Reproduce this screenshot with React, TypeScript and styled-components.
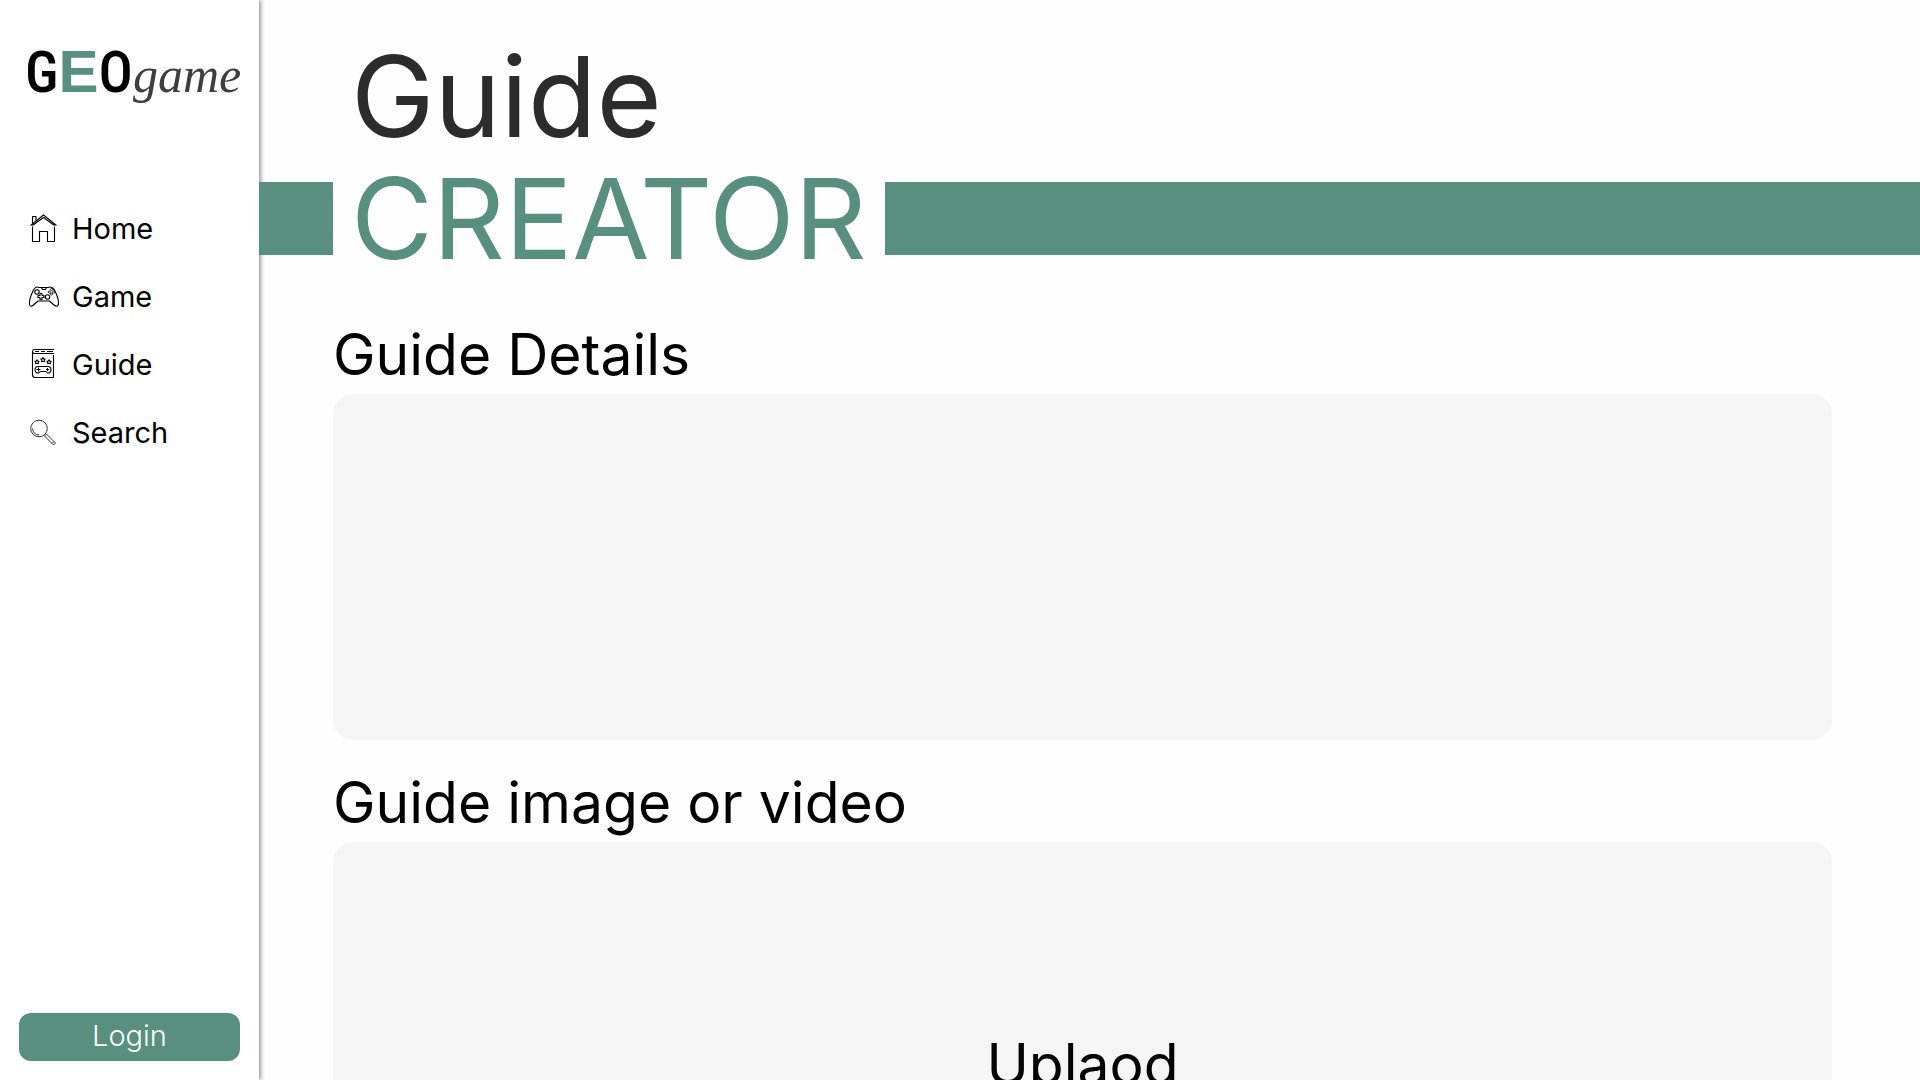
import React from 'react';
import styled, { createGlobalStyle } from 'styled-components';

const green = '#588f7e';

const GlobalStyle = createGlobalStyle`
  *, *::before, *::after { box-sizing: border-box; }
  body {
    margin: 0;
    background: #fefefe;
    color: #000;
    font-family: Inter, 'Noto Sans', sans-serif;
  }
`;

const Page = styled.div`
  display: flex;
  height: 100vh;
`;

const Sidebar = styled.aside`
  display: flex;
  flex-direction: column;
  flex: 0 0 259px;
  min-width: 0;
  padding: 32px 19px 19px;
  background: #fff;
  box-shadow: 2px 0 4px rgba(0, 0, 0, 0.4);
`;

const Logo = styled.a`
  display: flex;
  align-items: baseline;
  height: 100px;
  padding-left: 6px;
  color: #000;
  line-height: 80px;
  text-decoration: none;
  white-space: nowrap;
`;

const LogoLetter = styled.span`
  font-family: 'Roboto Condensed', 'Liberation Sans Narrow', 'Liberation Sans', sans-serif;
  font-size: 57px;
  font-weight: 500;
`;

const LogoAccent = styled.span`
  color: ${green};
  font-family: 'Liberation Sans', sans-serif;
  font-size: 60px;
  font-weight: 700;
`;

const LogoScript = styled.span`
  color: #3e3e3e;
  font-family: 'Liberation Serif', serif;
  font-size: 50px;
  font-style: italic;
`;

const Nav = styled.nav`
  display: flex;
  flex-direction: column;
  flex: 1;
  margin-top: 62px;
  padding-left: 9px;
`;

const NavLink = styled.a`
  display: flex;
  align-items: center;
  gap: 12px;
  height: 68px;
  color: #000;
  font-size: 29px;
  text-decoration: none;
`;

const Icon = styled.svg`
  width: 32px;
  height: 32px;
  fill: none;
  stroke: #000;
  stroke-width: 1.1;
  stroke-linejoin: round;
`;

const LoginButton = styled.button`
  height: 48px;
  padding: 0 0 3px;
  border: 0;
  border-radius: 12px;
  background: ${green};
  color: #fff;
  font-family: inherit;
  font-size: 29px;
  font-weight: 300;
`;

const Main = styled.main`
  position: relative;
  flex: 1;
  min-width: 0;
  overflow-y: auto;
  scrollbar-width: none;
`;

const Title = styled.h1`
  margin: 0;
  padding-top: 35px;
  color: #2c2c2c;
  font-size: 112px;
  font-weight: 400;
  line-height: 122px;
`;

const TitleTop = styled.span`
  display: block;
  padding-left: 92px;
`;

const TitleBand = styled.span`
  display: flex;
  align-items: center;
  color: ${green};

  &::before,
  &::after {
    content: '';
    height: 73px;
    background: ${green};
  }
  &::before { width: 74px; }
  &::after { flex: 1; }
`;

const TitleWord = styled.span`
  padding: 0 18px;
`;

const Content = styled.div`
  display: flex;
  flex-direction: column;
  gap: 31px;
  padding: 44px 88px 64px 74px;
`;

const Section = styled.section`
  display: flex;
  flex-direction: column;
  gap: 7px;
`;

const Heading = styled.h2`
  margin: 0;
  font-size: 57px;
  font-weight: 400;
  line-height: 64px;
`;

const Panel = styled.div<{ $height: number }>`
  display: grid;
  place-items: center;
  min-height: ${({ $height }) => $height}px;
  border-radius: 20px;
  background: #f5f5f5;
`;

const UploadButton = styled.button`
  border: 0;
  background: none;
  color: inherit;
  font-family: inherit;
  font-size: 57px;
  line-height: 64px;
`;

const HomeIcon = () => (
  <Icon viewBox="0 0 32 32" aria-hidden="true">
    <path d="M2.5 13.5 15.5 3 28.5 13.5M4.5 13.5 15.5 5.5 26.5 13.5M4.5 14.5V29.5H11.5V19.5H19.5V29.5H26.5V14.5M4.5 11.5V4.5H8V8.5" />
  </Icon>
);

const GameIcon = () => (
  <Icon viewBox="0 0 32 32" aria-hidden="true">
    <path d="M7.5 7.5Q9 6.5 11 7.5H20Q22 6.5 24 7.5L26.5 10Q31 19 30.5 24Q29.5 28 26 25L21.5 21H10L5.5 25Q2 28 1.5 24Q1 19 5.5 10ZM13.5 7.5 14.5 9.5H17.5L18.5 7.5" />
    <circle cx="9" cy="12" r="2.2" />
    <circle cx="19.5" cy="17" r="2.2" />
    <path d="M12 13.5H14V15.5H16V17.5H14V19.5H12V17.5H10V15.5H12Z" />
    <g strokeWidth="0.8">
      <circle cx="23.5" cy="9.5" r="1.1" />
      <circle cx="21.3" cy="12" r="1.1" />
      <circle cx="25.7" cy="12" r="1.1" />
      <circle cx="23.5" cy="14" r="1.1" />
    </g>
  </Icon>
);

const GuideIcon = () => (
  <Icon viewBox="0 0 32 32" aria-hidden="true">
    <path d="M26 1.5H6Q4.500 1.500 4.500 3.500V26.500Q4.500 29.500 7 29.500H25.500V7M4.500 3.500Q4.500 5.500 6.500 5.500H26M7 3.500H11M13 3.500H17M19 3.500H25" />
    <path d="M15 9.500 15.800 11H17.200L16.200 12.200 16.500 13.500H13.500L13.800 12.200 12.800 11H14.200ZM9 11.800 9.800 13.200H11.200L10.200 14.300 10.500 15.500H7.500L7.800 14.300 6.800 13.200H8.200ZM21 11.800 21.800 13.200H23.200L22.200 14.300 22.500 15.500H19.500L19.800 14.300 18.800 13.200H20.200Z" />
    <path d="M10 18.500H20Q23 18.500 23 22Q22.500 25.500 19.500 25Q18.500 23.500 17.500 23.500H13Q12 23.500 10.500 25Q7.500 25.500 7 22Q7 18.500 10 18.500ZM8.500 21.500H12.500M10.500 19.500V23.500M19.500 20V23M18 21.500H21" />
  </Icon>
);

const SearchIcon = () => (
  <Icon viewBox="0 0 32 32" aria-hidden="true">
    <g stroke="#333" strokeWidth="1">
      <circle cx="11" cy="12.500" r="8.300" />
      <path d="M4.500 12.500Q5 18.500 11 19M16.500 20 18.500 18 27.500 27 25.500 29ZM24 27.500 26 25.500" />
    </g>
  </Icon>
);

const links = [
  { label: 'Home', icon: HomeIcon },
  { label: 'Game', icon: GameIcon },
  { label: 'Guide', icon: GuideIcon },
  { label: 'Search', icon: SearchIcon },
];

export default function App() {
  return (
    <>
      <GlobalStyle />
      <Page>
        <Sidebar>
          <Logo href="#">
            <LogoLetter>G</LogoLetter>
            <LogoAccent>E</LogoAccent>
            <LogoLetter>O</LogoLetter>
            <LogoScript>game</LogoScript>
          </Logo>
          <Nav>
            {links.map(({ label, icon: LinkIcon }) => (
              <NavLink href="#" key={label}>
                <LinkIcon />
                {label}
              </NavLink>
            ))}
          </Nav>
          <LoginButton type="button">Login</LoginButton>
        </Sidebar>
        <Main>
          <Title>
            <TitleTop>Guide</TitleTop>
            <TitleBand>
              <TitleWord>CREATOR</TitleWord>
            </TitleBand>
          </Title>
          <Content>
            <Section>
              <Heading>Guide Details</Heading>
              <Panel $height={346} />
            </Section>
            <Section>
              <Heading>Guide image or video</Heading>
              <Panel $height={446}>
                <UploadButton type="button">Uplaod</UploadButton>
              </Panel>
            </Section>
          </Content>
        </Main>
      </Page>
    </>
  );
}
